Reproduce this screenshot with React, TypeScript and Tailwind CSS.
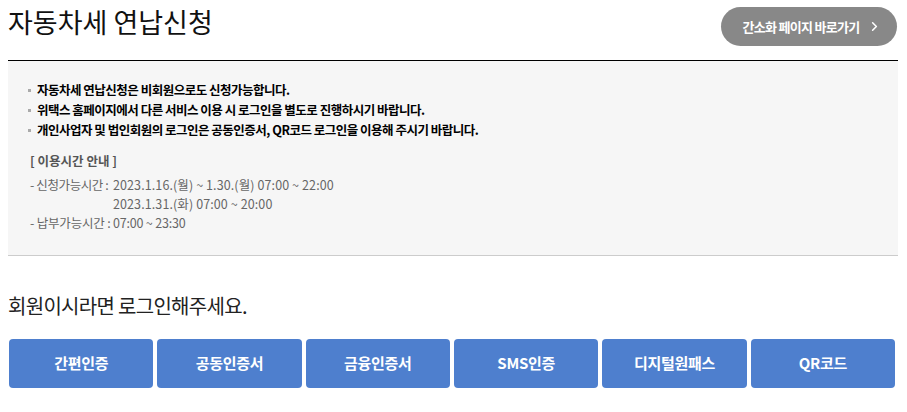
import { ChevronRight } from "lucide-react"

const notices = [
    "자동차세 연납신청은 비회원으로도 신청가능합니다.",
    "위택스 홈페이지에서 다른 서비스 이용 시 로그인을 별도로 진행하시기 바랍니다.",
    "개인사업자 및 법인회원의 로그인은 공동인증서, QR코드 로그인을 이용해 주시기 바랍니다.",
]

const loginMethods = ["간편인증", "공동인증서", "금융인증서", "SMS인증", "디지털원패스", "QR코드"]

const font = { fontFamily: '"Noto Sans CJK KR", "Noto Sans", sans-serif' }

export default function App() {
    return (
        <div className="w-[907px] h-[412px] bg-white pl-[8px] pr-[9px] text-[#111]" style={font}>
            {/* Header */}
            <div className="h-[61px] flex items-start justify-between border-b border-black">
                <h1 className="mt-[2px] text-[27px] leading-[40px] tracking-[0px] font-normal">자동차세 연납신청</h1>
                <button className="mt-[7px] mr-[1px] h-[39px] w-[176px] rounded-full bg-[#888888] text-white flex items-center justify-center gap-[7px] pl-[6px]">
                    <span className="text-[13px] font-bold tracking-[-0.7px]">간소화 페이지 바로가기</span>
                    <ChevronRight className="h-[15px] w-[15px]" strokeWidth={2.5} />
                </button>
            </div>

            {/* Notice box */}
            <div className="h-[195px] bg-[#f6f6f6] border-b border-[#cccccc] pt-[19px] px-[20px]">
                <ul>
                    {notices.map((text, index) => (
                        <li key={index} className="flex items-center h-[20px] text-[12.5px] font-semibold tracking-[-0.5px] text-black">
                            <span className="w-[3px] h-[3px] bg-[#aaaaaa] mr-[6px]" />
                            {text}
                        </li>
                    ))}
                </ul>

                <div className="mt-[11px] ml-[2px] text-[12.5px]">
                    <p className="h-[20px] leading-[20px] font-bold text-[#555555]">[ 이용시간 안내 ]</p>
                    <div className="mt-[4px] text-[#666666] leading-[19px]">
                        <div className="flex">
                            <span className="w-[83px] shrink-0 tracking-[-0.4px]">- 신청가능시간 :</span>
                            <div className="tracking-[0.1px]">
                                <p>2023.1.16.(월) ~ 1.30.(월) 07:00 ~ 22:00</p>
                                <p>2023.1.31.(화) 07:00 ~ 20:00</p>
                            </div>
                        </div>
                        <p className="tracking-[-0.2px]">- 납부가능시간 : 07:00 ~ 23:30</p>
                    </div>
                </div>
            </div>

            {/* Login */}
            <p className="mt-[35px] text-[20px] leading-[30px] tracking-[-0.7px] text-[#222222]">회원이시라면 로그인해주세요.</p>
            <div className="mt-[18px] ml-[1px] mr-[3px] grid grid-cols-6 gap-[4px]">
                {loginMethods.map((label) => (
                    <button
                        key={label}
                        className="h-[49px] rounded-[4px] bg-[#4e7fce] text-white text-[15px] font-bold tracking-[-0.3px]"
                    >
                        {label}
                    </button>
                ))}
            </div>
        </div>
    )
}
